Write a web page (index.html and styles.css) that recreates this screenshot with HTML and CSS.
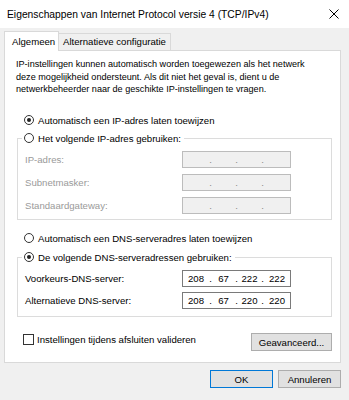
FILE: index.html
```html
<!DOCTYPE html>
<html lang="nl">
<head>
<meta charset="utf-8">
<title>Eigenschappen van Internet Protocol versie 4 (TCP/IPv4)</title>
<link rel="stylesheet" href="styles.css">
</head>
<body>
<div class="window">
  <header class="titlebar">
    <span class="title">Eigenschappen van Internet Protocol versie 4 (TCP/IPv4)</span>
    <svg class="close" width="10" height="10" viewBox="0 0 10 10"><path d="M0.5 0.5L9.5 9.5M9.5 0.5L0.5 9.5" stroke="#000" stroke-width="1" fill="none"/></svg>
  </header>
  <main class="content">
    <div class="tabs">
      <div class="tab tab-active">Algemeen</div>
      <div class="tab tab-other">Alternatieve configuratie</div>
    </div>
    <section class="panel">
      <p class="intro">IP-instellingen kunnen automatisch worden toegewezen als het netwerk<br>deze mogelijkheid ondersteunt. Als dit niet het geval is, dient u de<br>netwerkbeheerder naar de geschikte IP-instellingen te vragen.</p>

      <div class="option opt-first"><span class="radio checked"></span><span>Automatisch een IP-adres laten toewijzen</span></div>

      <fieldset class="group group-ip">
        <legend class="legend"><span class="radio"></span><span>Het volgende IP-adres gebruiken:</span></legend>
        <div class="grid grid-ip">
          <span class="label disabled">IP-adres:</span>
          <div class="ipfield off"><span></span><span class="dot">.</span><span></span><span class="dot">.</span><span></span><span class="dot">.</span><span></span></div>
          <span class="label disabled">Subnetmasker:</span>
          <div class="ipfield off"><span></span><span class="dot">.</span><span></span><span class="dot">.</span><span></span><span class="dot">.</span><span></span></div>
          <span class="label disabled">Standaardgateway:</span>
          <div class="ipfield off"><span></span><span class="dot">.</span><span></span><span class="dot">.</span><span></span><span class="dot">.</span><span></span></div>
        </div>
      </fieldset>

      <div class="option opt-dns"><span class="radio"></span><span>Automatisch een DNS-serveradres laten toewijzen</span></div>

      <fieldset class="group group-dns">
        <legend class="legend"><span class="radio checked"></span><span>De volgende DNS-serveradressen gebruiken:</span></legend>
        <div class="grid grid-dns">
          <span class="label">Voorkeurs-DNS-server:</span>
          <div class="ipfield on"><span>208</span><span class="dot">.</span><span>67</span><span class="dot">.</span><span>222</span><span class="dot">.</span><span>222</span></div>
          <span class="label">Alternatieve DNS-server:</span>
          <div class="ipfield on"><span>208</span><span class="dot">.</span><span>67</span><span class="dot">.</span><span>220</span><span class="dot">.</span><span>220</span></div>
        </div>
      </fieldset>

      <div class="check-row">
        <div class="check-option"><span class="checkbox"></span><span>Instellingen tijdens afsluiten valideren</span></div>
        <button class="btn btn-adv" type="button">Geavanceerd...</button>
      </div>
    </section>
    <div class="buttons">
      <button class="btn btn-ok" type="button">OK</button>
      <button class="btn" type="button">Annuleren</button>
    </div>
  </main>
</div>
</body>
</html>
```
FILE: styles.css
```css
* { box-sizing: border-box; }

body {
  margin: 0;
  width: 349px;
  height: 400px;
  overflow: hidden;
  background: #f0f0f0;
  font-family: "Liberation Sans", Arial, sans-serif;
  font-size: 9.6px;
  color: #000;
}

.window { height: 400px; }

.titlebar {
  height: 28px;
  background: #fff;
  display: flex;
  align-items: center;
  justify-content: space-between;
  padding: 0 10px 0 7px;
}
.title { font-size: 10.3px; }
.close { display: block; margin-top: -1px; }

.content { padding: 3px 0 0 4px; }

.tabs {
  display: flex;
  align-items: flex-end;
  height: 19px;
}
.tab {
  height: 17px;
  border-top: 1px solid #d9d9d9;
  border-right: 1px solid #d9d9d9;
  background: #f0f0f0;
  line-height: 16px;
  white-space: nowrap;
}
.tab-active {
  position: relative;
  z-index: 1;
  width: 55px;
  height: 20px;
  margin-bottom: -1px;
  padding: 1px 0 0 7px;
  line-height: 18px;
  border-left: 1px solid #d9d9d9;
  background: #fff;
}
.tab-other {
  width: 112px;
  padding-left: 4px;
}

.panel {
  width: 337px;
  background: #fff;
  border: 1px solid #d9d9d9;
  padding: 7px 8px 11px 12px;
}

.intro {
  margin: 0 0 0 -1px;
  font-size: 9.1px;
  line-height: 12.5px;
  white-space: nowrap;
}

.option {
  display: flex;
  align-items: center;
  gap: 4px;
  height: 14px;
  padding-left: 7px;
  white-space: nowrap;
}
.opt-first { margin-top: 17.5px; }
.opt-dns { margin-top: 11px; }

.radio {
  width: 10px;
  height: 10px;
  flex: none;
  border: 1px solid #333;
  border-radius: 50%;
  display: flex;
  align-items: center;
  justify-content: center;
  background: #fff;
}
.radio.checked::after {
  content: "";
  width: 4px;
  height: 4px;
  border-radius: 50%;
  background: #222;
}

.group {
  width: 315px;
  min-width: 0;
  margin: 4px 0 0;
  padding: 6px 0 5px 7px;
  border: 1px solid #dcdcdc;
}
.group-dns {
  margin-top: 5px;
  padding-bottom: 7px;
}

.legend {
  display: flex;
  align-items: center;
  gap: 4px;
  height: 14px;
  margin-left: -3px;
  padding: 0 3px 0 2px;
  white-space: nowrap;
}

.grid {
  display: grid;
  grid-template-columns: 157px 109px;
  row-gap: 6px;
  align-items: center;
}
.grid-dns { row-gap: 5px; }

.label { white-space: nowrap; }
.disabled { color: #9a9a9a; }

.ipfield {
  height: 17px;
  display: grid;
  grid-template-columns: 26px 3px 23px 3px 23px 3px 1fr;
  text-align: center;
  line-height: 15px;
}
.ipfield.off {
  background: #f0f0f0;
  border: 1px solid #bcbcbc;
  color: #8a8a8a;
}
.ipfield.on {
  background: #fff;
  border: 1px solid #7a7a7a;
}

.check-row {
  margin-top: 16px;
  display: flex;
  justify-content: space-between;
  align-items: flex-start;
}
.check-option {
  display: flex;
  align-items: center;
  gap: 3px;
  height: 12px;
  padding-left: 6px;
  white-space: nowrap;
}
.checkbox {
  width: 11px;
  height: 11px;
  flex: none;
  border: 1px solid #333;
  background: #fff;
}

.btn {
  height: 18px;
  padding: 0;
  background: #e1e1e1;
  border: 1px solid #adadad;
  font-family: inherit;
  font-size: 9.6px;
  color: #000;
  text-align: center;
}
.btn-adv { width: 81px; }

.buttons {
  margin-top: 7px;
  display: flex;
  justify-content: flex-end;
  gap: 5px;
  padding-right: 8px;
}
.buttons .btn { width: 63px; }
.btn-ok { border-color: #0078d7; }
```
